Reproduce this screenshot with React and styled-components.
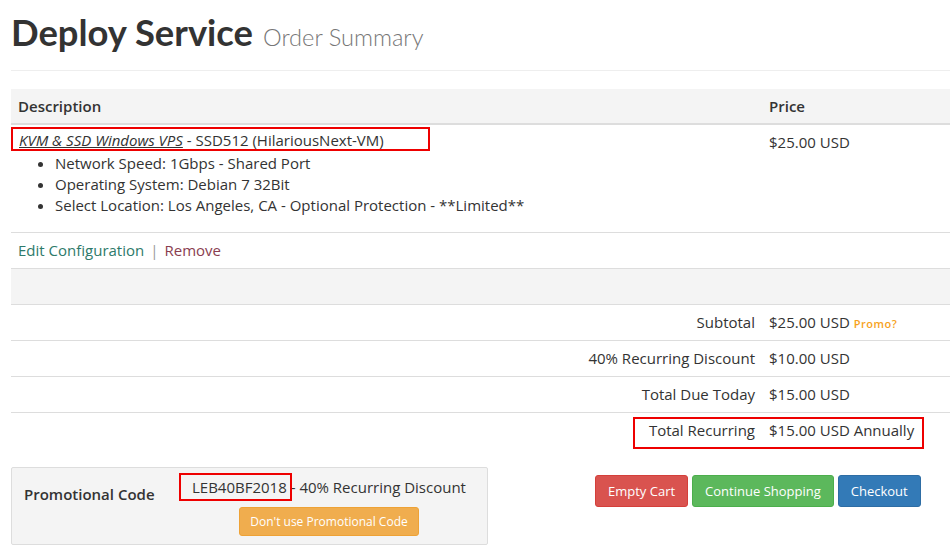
import React from 'react';
import styled, { createGlobalStyle } from 'styled-components';

const GlobalStyle = createGlobalStyle`
  html, body {
    margin: 0;
    padding: 0;
    background: #fff;
    overflow: hidden;
  }
  body {
    font-family: 'Open Sans', 'Liberation Sans', sans-serif;
    font-size: 15px;
    color: #333;
  }
`;

const Page = styled('div')`
  width: 960px;
  padding: 0 0 0 11px;
  box-sizing: border-box;
`;

const Header = styled('div')`
  display: flex;
  align-items: baseline;
  gap: 10px;
  padding: 12px 0 17px;
  border-bottom: 1px solid #eee;
`;

const Title = styled('h1')`
  margin: 0;
  font-family: 'Lato', 'Open Sans', sans-serif;
  font-weight: 700;
  font-size: 36.4px;
  line-height: 41px;
  color: #333;
`;

const SubTitle = styled('span')`
  font-family: 'Lato', 'Open Sans', sans-serif;
  font-weight: 300;
  font-size: 23.6px;
  color: #777;
`;

const Table = styled('div')`
  margin-top: 18px;
`;

const Row = styled('div')`
  position: relative;
  display: grid;
  grid-template-columns: 751px 1fr;
  background: ${(p) => (p.$shade ? '#f4f4f4' : '#fff')};
  border-bottom: ${(p) => (p.$border === false ? 'none' : `${p.$thick ? 2 : 1}px solid #ddd`)};
  min-height: ${(p) => p.$h || 35}px;
  box-sizing: border-box;
`;

const HeadCell = styled('div')`
  font-weight: 600;
  padding: 7px 7px;
  line-height: 20px;
`;

const Cell = styled('div')`
  padding: 7px 7px 6px;
  line-height: 21px;
  text-align: ${(p) => (p.$right ? 'right' : 'left')};
`;

const ItemCell = styled('div')`
  padding: 2px 7px 16px;
  border-bottom: 1px solid #ddd;
  margin-bottom: -1px;
  line-height: 21px;
`;

const ItemTitle = styled('div')`
  margin: 0 0 2px -7px;
  width: 419px;
  height: 24px;
  box-sizing: border-box;
  border: 2px solid #e00;
  padding: 1px 0 0 6px;
  line-height: 21px;
`;

const ItemLink = styled('a')`
  color: #333;
  font-style: italic;
  text-decoration: underline;
`;

const Options = styled('ul')`
  margin: 0;
  padding-left: 37px;
  list-style: disc;
  li {
    line-height: 21px;
  }
`;

const Links = styled('div')`
  padding: 7px 7px;
  line-height: 21px;
  border-bottom: 1px solid #ddd;
`;

const TextLink = styled('a')`
  color: ${(p) => p.$color};
  text-decoration: none;
`;

const Sep = styled('span')`
  color: #999;
  margin: 0 6px;
`;

const PromoHint = styled('span')`
  color: #f7a21b;
  font-size: 11px;
  font-weight: 600;
  letter-spacing: 0.5px;
  margin-left: 4px;
`;

const Marker = styled('div')`
  position: absolute;
  left: ${(p) => p.$left}px;
  top: ${(p) => p.$top}px;
  width: ${(p) => p.$w}px;
  height: ${(p) => p.$hgt}px;
  border: 2px solid #e00;
  box-sizing: border-box;
  pointer-events: none;
`;

const Footer = styled('div')`
  display: flex;
  align-items: flex-start;
  margin-top: 18px;
`;

const PromoBox = styled('div')`
  width: 477px;
  box-sizing: border-box;
  background: #f4f4f4;
  border: 1px solid #ddd;
  border-radius: 2px;
  display: flex;
  padding: 9px 12px 8px;
`;

const PromoLabel = styled('div')`
  font-weight: 600;
  width: 168px;
  padding-top: 7px;
`;

const PromoBody = styled('div')`
  display: flex;
  flex-direction: column;
  align-items: center;
  gap: 10px;
`;

const PromoCode = styled('span')`
  position: relative;
`;

const Button = styled('button')`
  font-family: 'Open Sans', 'Liberation Sans', sans-serif;
  font-size: ${(p) => (p.$small ? '12px' : '13px')};
  color: #fff;
  background: ${(p) => p.$bg};
  border: 1px solid ${(p) => p.$border};
  border-radius: 3px;
  padding: ${(p) => (p.$small ? '5px 10px' : '6px 12px')};
  line-height: ${(p) => (p.$small ? '17px' : '18px')};
  cursor: pointer;
`;

const Actions = styled('div')`
  display: flex;
  gap: 4px;
  margin-left: 107px;
  margin-top: 8px;
`;

export default function App() {
  return (
    <Page>
      <GlobalStyle />
      <Header>
        <Title>Deploy Service</Title>
        <SubTitle>Order Summary</SubTitle>
      </Header>
      <Table>
        <Row $shade $thick>
          <HeadCell>Description</HeadCell>
          <HeadCell>Price</HeadCell>
        </Row>
        <Row $h={108}>
          <ItemCell>
            <ItemTitle>
              <ItemLink href="#">KVM &amp; SSD Windows VPS</ItemLink> - SSD512 (HilariousNext-VM)
            </ItemTitle>
            <Options>
              <li>Network Speed: 1Gbps - Shared Port</li>
              <li>Operating System: Debian 7 32Bit</li>
              <li>Select Location: Los Angeles, CA - Optional Protection - **Limited**</li>
            </Options>
          </ItemCell>
          <Cell>$25.00 USD</Cell>
        </Row>
        <Links>
          <TextLink href="#" $color="#2e7a6a">Edit Configuration</TextLink>
          <Sep>|</Sep>
          <TextLink href="#" $color="#8a3e50">Remove</TextLink>
        </Links>
        <Row $shade $h={36}>
          <Cell />
          <Cell />
        </Row>
        <Row $h={36}>
          <Cell $right>Subtotal</Cell>
          <Cell>
            $25.00 USD<PromoHint>Promo?</PromoHint>
          </Cell>
        </Row>
        <Row $h={36}>
          <Cell $right>40% Recurring Discount</Cell>
          <Cell>$10.00 USD</Cell>
        </Row>
        <Row $h={36}>
          <Cell $right>Total Due Today</Cell>
          <Cell>$15.00 USD</Cell>
        </Row>
        <Row $h={36} $border={false}>
          <Cell $right>Total Recurring</Cell>
          <Cell>$15.00 USD Annually</Cell>
          <Marker $left={622} $top={4} $w={291} $hgt={32} />
        </Row>
      </Table>
      <Footer>
        <PromoBox>
          <PromoLabel>Promotional Code</PromoLabel>
          <PromoBody>
            <div>
              <PromoCode>
                LEB40BF2018
                <Marker $left={-13} $top={-4} $w={113} $hgt={28} />
              </PromoCode>{' '}
              - 40% Recurring Discount
            </div>
            <Button $small $bg="#f0ad4e" $border="#eea236">
              Don&apos;t use Promotional Code
            </Button>
          </PromoBody>
        </PromoBox>
        <Actions>
          <Button $bg="#d9534f" $border="#d43f3a">Empty Cart</Button>
          <Button $bg="#5cb85c" $border="#4cae4c">Continue Shopping</Button>
          <Button $bg="#337ab7" $border="#2e6da4">Checkout</Button>
        </Actions>
      </Footer>
    </Page>
  );
}
